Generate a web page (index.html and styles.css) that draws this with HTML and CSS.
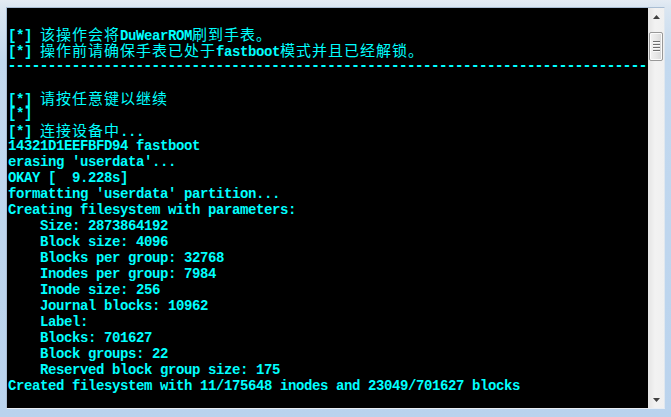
FILE: index.html
```html
<!DOCTYPE html>
<html>
<head>
<meta charset="utf-8">
<link rel="stylesheet" href="styles.css">
</head>
<body>
<div class="window">
  <div class="frame">
    <div class="console">
      <div class="ln"> </div>
      <div class="ln">[*] <span class="cjk">该操作会将</span>DuWearROM<span class="cjk">刷到手表。</span></div>
      <div class="ln">[*] <span class="cjk">操作前请确保手表已处于</span>fastboot<span class="cjk">模式并且已经解锁。</span></div>
      <div class="ln dash">--------------------------------------------------------------------------------</div>
      <div class="ln"> </div>
      <div class="ln">[*] <span class="cjk">请按任意键以继续</span></div>
      <div class="ln">[*]</div>
      <div class="ln">[*] <span class="cjk">连接设备中</span>...</div>
      <div class="ln">14321D1EEFBFD94 fastboot</div>
      <div class="ln">erasing 'userdata'...</div>
      <div class="ln">OKAY [  9.228s]</div>
      <div class="ln">formatting 'userdata' partition...</div>
      <div class="ln">Creating filesystem with parameters:</div>
      <div class="ln">    Size: 2873864192</div>
      <div class="ln">    Block size: 4096</div>
      <div class="ln">    Blocks per group: 32768</div>
      <div class="ln">    Inodes per group: 7984</div>
      <div class="ln">    Inode size: 256</div>
      <div class="ln">    Journal blocks: 10962</div>
      <div class="ln">    Label:</div>
      <div class="ln">    Blocks: 701627</div>
      <div class="ln">    Block groups: 22</div>
      <div class="ln">    Reserved block group size: 175</div>
      <div class="ln">Created filesystem with 11/175648 inodes and 23049/701627 blocks</div>
    </div>
    <div class="scrollbar">
      <div class="arrow up"><svg width="7" height="4" viewBox="0 0 7 4"><polygon points="3.5,0 7,4 0,4" fill="#404040"/></svg></div>
      <div class="track">
        <div class="thumb">
          <div class="grip"></div>
          <div class="grip"></div>
          <div class="grip"></div>
          <div class="grip"></div>
        </div>
      </div>
      <div class="arrow down"><svg width="7" height="4" viewBox="0 0 7 4"><polygon points="0,0 7,0 3.5,4" fill="#404040"/></svg></div>
    </div>
  </div>
</div>
</body>
</html>
```
FILE: styles.css
```css
html, body {
  margin: 0;
  padding: 0;
  background: #bcd4ec;
}
.window {
  width: 671px;
  height: 417px;
  box-sizing: border-box;
  padding: 7px 6px 8px 6px;
  background: linear-gradient(to bottom, #e4ebf3 0px, #dbe6f1 7px, #c3d9ef 60px, #bad3ed 417px);
  overflow: hidden;
}
.frame {
  display: flex;
  height: 402px;
  border: 1px solid #a9bdd3;
  border-right-color: #dfe7ef;
  border-bottom-color: #e8eef5;
  box-sizing: border-box;
}
.console {
  width: 641px;
  flex: none;
  background: #000;
  padding: 2px 0 0 1px;
  box-sizing: border-box;
  overflow: hidden;
  color: #00ffff;
  font-family: "Liberation Mono", "DejaVu Sans Mono", monospace;
  font-weight: bold;
  font-size: 14px;
  letter-spacing: -0.4px;
}
.ln {
  height: 16px;
  line-height: 16px;
  white-space: pre;
}
.dash {
  font-family: "DejaVu Sans Mono", monospace;
  font-size: 13.28px;
  letter-spacing: 0;
}
.cjk {
  font-family: "Noto Sans CJK SC", sans-serif;
  font-weight: normal;
  font-size: 15px;
  letter-spacing: 1px;
  line-height: 16px;
}
.scrollbar {
  flex: 1;
  display: flex;
  flex-direction: column;
  background: linear-gradient(to right, #e6e6e6, #f2f2f2 40%, #f0f0f0);
  border-left: 1px solid #e8e8e8;
}
.arrow {
  height: 17px;
  flex: none;
  display: flex;
  align-items: center;
  justify-content: center;
}
.track {
  flex: 1;
  padding-top: 7px;
}
.thumb {
  margin: 0 1px 0 0;
  height: 29px;
  box-sizing: border-box;
  border: 1px solid #989898;
  border-radius: 2px;
  background: linear-gradient(to right, #f2f2f2, #e7e7e7 50%, #d8d8d8);
  box-shadow: inset 0 0 0 1px #fbfbfb;
  display: flex;
  flex-direction: column;
  align-items: center;
  justify-content: center;
  gap: 1px;
}
.grip {
  width: 7px;
  height: 1px;
  background: #6f6f6f;
  border-bottom: 1px solid #fafafa;
}
```
